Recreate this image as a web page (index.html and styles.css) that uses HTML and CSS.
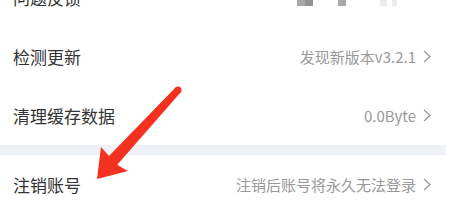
FILE: index.html
```html
<!DOCTYPE html>
<html lang="zh-CN">
<head>
    <meta charset="UTF-8">
    <meta name="viewport" content="width=device-width, initial-scale=1.0">
    <title>设置</title>
    <link rel="stylesheet" href="styles.css">
</head>
<body>
    <div class="settings">
        <div class="group">
            <div class="row">
                <span class="label">问题反馈</span>
            </div>
            <div class="row">
                <span class="label">检测更新</span>
                <span class="value">发现新版本v3.2.1
                    <svg class="chevron" viewBox="0 0 8 13"><path d="M1 1l6 5.5L1 12"/></svg>
                </span>
            </div>
            <div class="row">
                <span class="label">清理缓存数据</span>
                <span class="value">0.0Byte
                    <svg class="chevron" viewBox="0 0 8 13"><path d="M1 1l6 5.5L1 12"/></svg>
                </span>
            </div>
        </div>
        <div class="divider"></div>
        <div class="group">
            <div class="row">
                <span class="label">注销账号</span>
                <span class="value">注销后账号将永久无法登录
                    <svg class="chevron" viewBox="0 0 8 13"><path d="M1 1l6 5.5L1 12"/></svg>
                </span>
            </div>
        </div>
    </div>

    <!-- mosaic over the feedback value -->
    <div class="mosaic">
        <span class="tile dark" style="left:297px;width:8px"></span>
        <span class="tile darker" style="left:305px;width:8px"></span>
        <span class="tile dark" style="left:338px;width:8px"></span>
        <span class="tile light" style="left:380px;width:7px"></span>
        <span class="tile light" style="left:392px;width:5px"></span>
    </div>

    <svg class="arrow" width="454" height="210" viewBox="0 0 454 210">
        <circle cx="178" cy="90" r="3.5"/>
        <polygon points="175.5,87.5 180.5,92.5 117,165 108,157"/>
        <polygon points="97,179 101,147 109,156 119,166 128,171"/>
    </svg>
</body>
</html>
```

FILE: styles.css
```css
body {
    margin: 0;
    padding: 0;
    background-color: #fff;
    font-family: "Noto Sans CJK SC", "Noto Sans", sans-serif;
    overflow: hidden;
}
.settings {
    width: 446px;
    margin-top: -32px;
}
.row {
    height: 59px;
    display: flex;
    align-items: center;
    justify-content: space-between;
    padding: 0 15px 0 13px;
}
.label {
    font-size: 17px;
    color: #333;
}
.value {
    display: flex;
    align-items: center;
    gap: 7px;
    font-size: 15px;
    color: #999;
}
.chevron {
    width: 8px;
    height: 13px;
    fill: none;
    stroke: #999;
    stroke-width: 1.3;
}
.divider {
    height: 10px;
    background-color: #eff1f8;
}
.mosaic .tile {
    position: absolute;
    top: 0;
    height: 6px;
}
.tile.dark {
    background-color: #a8a8a8;
}
.tile.darker {
    background-color: #949494;
}
.tile.light {
    background-color: #ececec;
}
.arrow {
    position: absolute;
    left: 0;
    top: 0;
    fill: #f4301e;
}
```
